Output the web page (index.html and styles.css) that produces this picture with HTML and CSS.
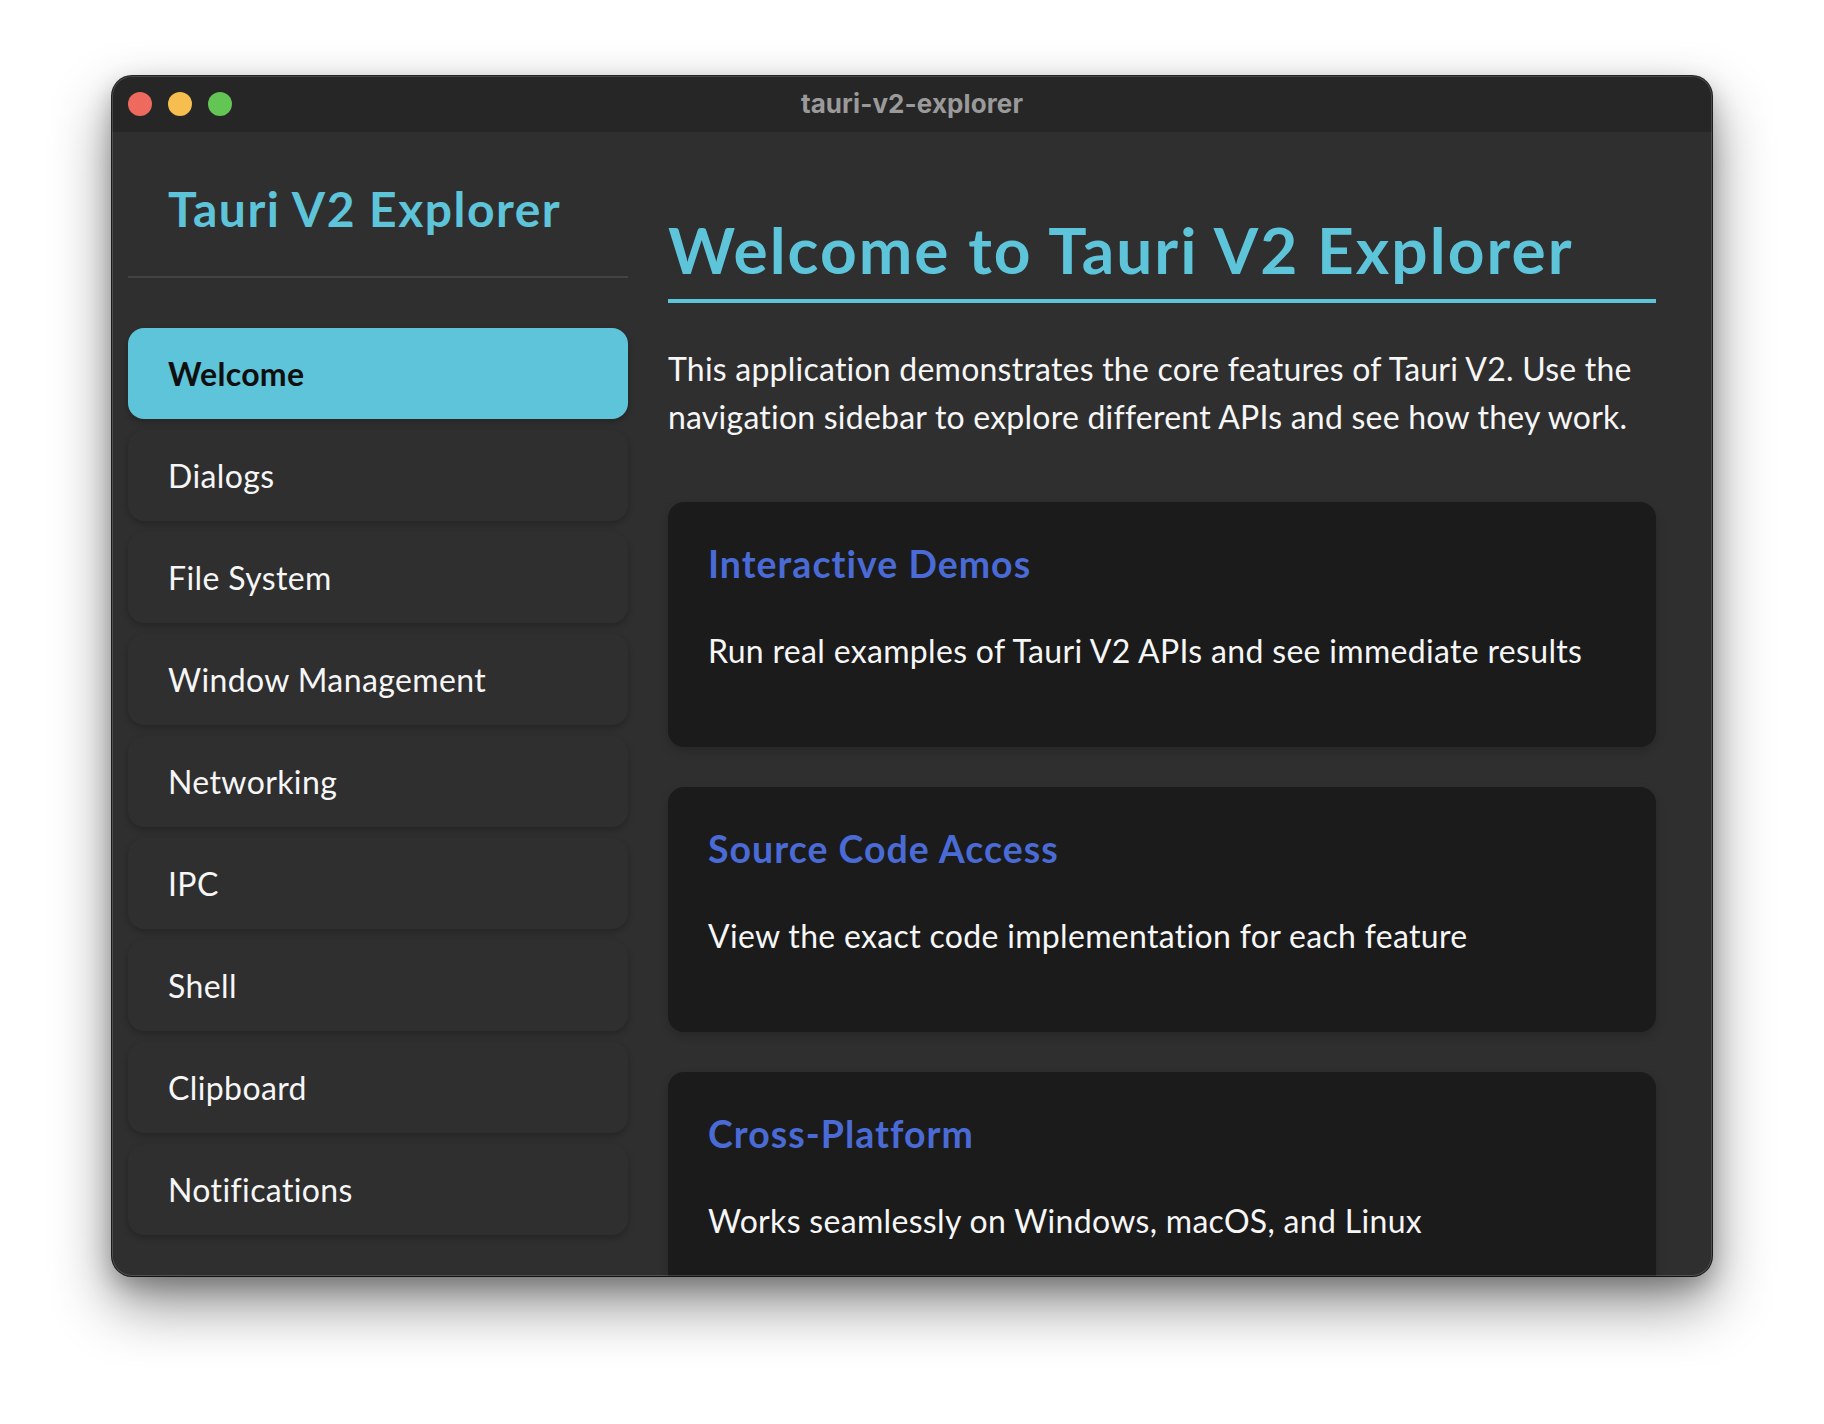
FILE: index.html
```html
<!DOCTYPE html>
<html lang="en">
<head>
<meta charset="utf-8">
<title>tauri-v2-explorer</title>
<link rel="stylesheet" href="styles.css">
</head>
<body>
<div class="window">
  <header class="titlebar">
    <div class="lights">
      <span class="light red"></span>
      <span class="light yellow"></span>
      <span class="light green"></span>
    </div>
    <div class="win-title">tauri-v2-explorer</div>
    <div class="spacer"></div>
  </header>
  <div class="app">
    <aside class="sidebar">
      <div class="brand">Tauri V2 Explorer</div>
      <nav class="nav">
        <button class="nav-item active">Welcome</button>
        <button class="nav-item">Dialogs</button>
        <button class="nav-item">File System</button>
        <button class="nav-item">Window Management</button>
        <button class="nav-item">Networking</button>
        <button class="nav-item">IPC</button>
        <button class="nav-item">Shell</button>
        <button class="nav-item">Clipboard</button>
        <button class="nav-item">Notifications</button>
      </nav>
    </aside>
    <main class="main">
      <h1 class="page-title">Welcome to Tauri V2 Explorer</h1>
      <p class="lead">This application demonstrates the core features of Tauri V2. Use the navigation sidebar to explore different APIs and see how they work.</p>
      <div class="cards">
        <section class="card">
          <h3 class="card-title">Interactive Demos</h3>
          <p class="card-text">Run real examples of Tauri V2 APIs and see immediate results</p>
        </section>
        <section class="card">
          <h3 class="card-title">Source Code Access</h3>
          <p class="card-text">View the exact code implementation for each feature</p>
        </section>
        <section class="card">
          <h3 class="card-title">Cross-Platform</h3>
          <p class="card-text">Works seamlessly on Windows, macOS, and Linux</p>
        </section>
      </div>
    </main>
  </div>
</div>
</body>
</html>
```

FILE: styles.css
```css
* { box-sizing: border-box; }

html, body {
  margin: 0;
  padding: 0;
}

body {
  width: 1824px;
  height: 1424px;
  background: #ffffff;
  font-family: "Lato", "Noto Sans", sans-serif;
  overflow: hidden;
}

.window {
  position: relative;
  margin: 76px 0 0 112px;
  width: 1600px;
  height: 1200px;
  border-radius: 20px;
  overflow: hidden;
  background: #2f2f2f;
  display: flex;
  flex-direction: column;
  box-shadow: 0 0 0 1px rgba(0, 0, 0, 0.85), 0 28px 60px rgba(0, 0, 0, 0.45), 0 10px 24px rgba(0, 0, 0, 0.25);
}

.window::after {
  content: "";
  position: absolute;
  inset: 0;
  border-radius: 20px;
  box-shadow: inset 0 0 0 1px rgba(255, 255, 255, 0.16);
  pointer-events: none;
}

.titlebar {
  flex: 0 0 56px;
  height: 56px;
  background: #262626;
  display: grid;
  grid-template-columns: 1fr auto 1fr;
  align-items: center;
}

.lights {
  display: flex;
  gap: 16px;
  padding-left: 16px;
}

.light {
  width: 24px;
  height: 24px;
  border-radius: 50%;
  display: block;
}
.red { background: #ee6a5f; }
.yellow { background: #f5be4f; }
.green { background: #62c554; }

.win-title {
  font-family: "Inter", "Roboto", sans-serif;
  font-weight: 700;
  font-size: 26px;
  color: #9a9a9a;
  letter-spacing: 0.1px;
  margin-top: -2px;
}

.app {
  flex: 1;
  display: flex;
  min-height: 0;
}

.sidebar {
  flex: 0 0 532px;
  padding: 0 16px;
}

.brand {
  font-size: 48px;
  line-height: 1.2;
  font-weight: 700;
  letter-spacing: 0.031em;
  color: #5ec4d9;
  padding: 48px 0 38px 40px;
  border-bottom: 2px solid #444444;
}

.nav {
  margin-top: 50px;
  display: flex;
  flex-direction: column;
  gap: 11px;
}

.nav-item {
  display: block;
  width: 100%;
  height: 91px;
  padding: 0 0 0 40px;
  border: none;
  border-radius: 16px;
  background: #2f2f2f;
  color: #f6f6f6;
  font-family: inherit;
  font-size: 32px;
  letter-spacing: 0.012em;
  text-align: left;
  box-shadow: 0 3px 6px rgba(0, 0, 0, 0.22);
}

.nav-item.active {
  background: #5ec4d9;
  color: #0f0f0f;
  font-weight: 700;
  letter-spacing: 0.01em;
}

.main {
  flex: 1;
  padding: 80px 56px 0 24px;
  color: #f6f6f6;
}

.page-title {
  margin: 0;
  font-size: 64px;
  line-height: 1.2;
  font-weight: 700;
  letter-spacing: 0.032em;
  color: #5ec4d9;
  padding-bottom: 10px;
  border-bottom: 4px solid #5ec4d9;
}

.lead {
  margin: 42px 0 0;
  font-size: 32px;
  line-height: 48px;
  letter-spacing: 0.007em;
}

.cards {
  margin-top: 61px;
  display: flex;
  flex-direction: column;
  gap: 40px;
}

.card {
  background: #1b1b1b;
  border-radius: 16px;
  padding: 40px 40px 0 40px;
  box-shadow: 0 4px 10px rgba(0, 0, 0, 0.18);
}

.card-title {
  margin: 0 0 40px;
  font-size: 37.44px;
  line-height: 1.2;
  font-weight: 700;
  letter-spacing: 0.028em;
  color: #4a6bd6;
}

.card-text {
  margin: 0;
  padding-bottom: 72px;
  font-size: 32px;
  line-height: 48px;
  letter-spacing: 0.01em;
}
```
